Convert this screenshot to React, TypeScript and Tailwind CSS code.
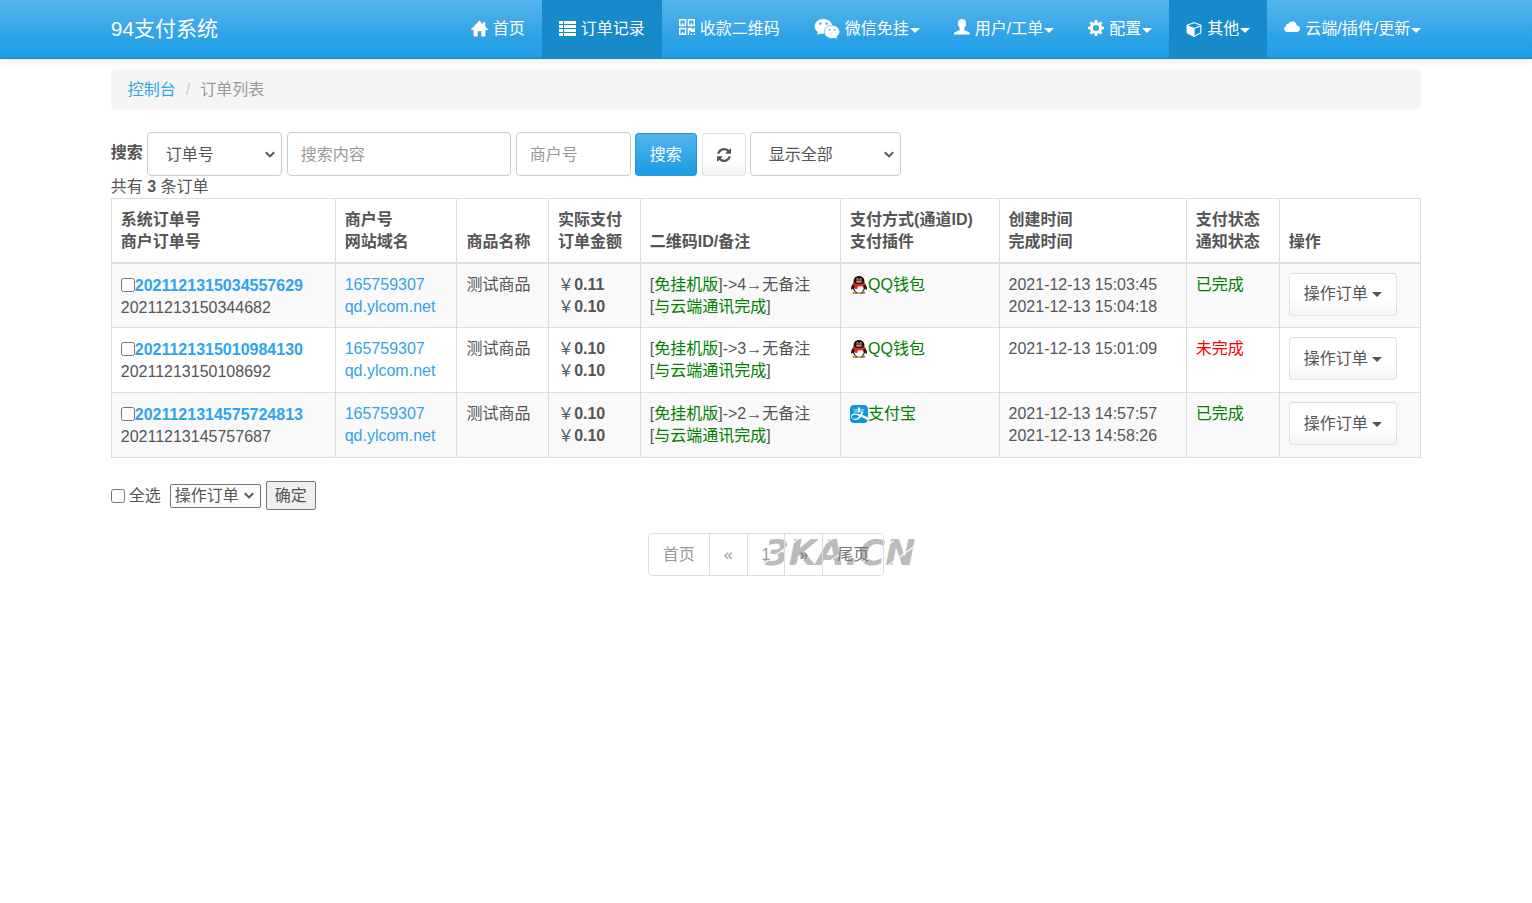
import React, { useState } from "react";
import { FaAlipay, FaWeixin } from "react-icons/fa";

interface Order {
  id: string;
  outId: string;
  merchant: string;
  domain: string;
  product: string;
  paid: string;
  amount: string;
  qrcode: number;
  channel: "qq" | "alipay";
  createdAt: string;
  finishedAt?: string;
  done: boolean;
}

const orders: Order[] = [
  {
    id: "2021121315034557629",
    outId: "20211213150344682",
    merchant: "165759307",
    domain: "qd.ylcom.net",
    product: "测试商品",
    paid: "0.11",
    amount: "0.10",
    qrcode: 4,
    channel: "qq",
    createdAt: "2021-12-13 15:03:45",
    finishedAt: "2021-12-13 15:04:18",
    done: true,
  },
  {
    id: "2021121315010984130",
    outId: "20211213150108692",
    merchant: "165759307",
    domain: "qd.ylcom.net",
    product: "测试商品",
    paid: "0.10",
    amount: "0.10",
    qrcode: 3,
    channel: "qq",
    createdAt: "2021-12-13 15:01:09",
    done: false,
  },
  {
    id: "2021121314575724813",
    outId: "20211213145757687",
    merchant: "165759307",
    domain: "qd.ylcom.net",
    product: "测试商品",
    paid: "0.10",
    amount: "0.10",
    qrcode: 2,
    channel: "alipay",
    createdAt: "2021-12-13 14:57:57",
    finishedAt: "2021-12-13 14:58:26",
    done: true,
  },
];

const HomeIcon = () => (
  <svg className="mb-0.5 size-[17px]" viewBox="0 0 16 15" fill="currentColor" aria-hidden="true">
    <path d="M8 0 0 8.200c-.2.3 0 .6.3.6H2.400v5.600c0 .400.200.600.600.600h3.300v-5h3.400v5H13c.400 0 .600-.200.600-.600V8.800h2.100c.300 0 .500-.300.300-.600L13.400 5.500V1.500h-2v2z" />
  </svg>
);

const ListIcon = () => (
  <svg className="h-4 w-[17px]" viewBox="0 0 17 16" fill="currentColor" aria-hidden="true">
    <path d="M0 0h4v3H0zM5 0h12v3H5zM0 4h4v3H0zM5 4h12v3H5zM0 8h4v3H0zM5 8h12v3H5zM0 12h4v3H0zM5 12h12v3H5z" />
  </svg>
);

const QrcodeIcon = () => (
  <svg className="mb-1 size-4" viewBox="0 0 1408 1408" fill="currentColor" aria-hidden="true">
    <path d="M384 1152v128h-128v-128h128zm0-768v128h-128v-128h128zm768 0v128h-128v-128h128zm-1024 895h384v-383h-384v383zm0-767h384v-384h-384v384zm768 0h384v-384h-384v384zm-256 256v640h-640v-640h640zm512 512v128h-128v-128h128zm256 0v128h-128v-128h128zm0-512v384h-384v-128h-128v384h-128v-640h384v128h128v-128h128zm-768-768v640h-640v-640h640zm768 0v640h-640v-640h640z" />
  </svg>
);

const UserIcon = () => (
  <svg className="mb-1 size-4" viewBox="0 0 16 16" fill="currentColor" aria-hidden="true">
    <path d="M8 0c2.500 0 4.100 1.600 4.100 4 0 2-.7 3.900-1.800 5v1.300c0 .5.300.9.800 1.100l3.600 1.500c.8.400 1.300 1.100 1.300 1.900v.6H0v-.6c0-.8.5-1.500 1.300-1.900l3.600-1.500c.5-.2.800-.6.800-1.100V9C4.600 7.900 3.900 6 3.900 4 3.900 1.600 5.500 0 8 0z" />
  </svg>
);

const CogIcon = () => (
  <svg className="mb-0.5 size-4" viewBox="0 0 16 16" fill="currentColor" aria-hidden="true">
    <path
      fillRule="evenodd"
      d="M6.800 0h2.400l.4 2.300 1.300.5 1.900-1.300 1.700 1.700-1.300 1.900.5 1.300 2.300.4v2.400l-2.300.4-.5 1.300 1.300 1.900-1.700 1.700-1.900-1.300-1.300.5-.4 2.300H6.800l-.4-2.300-1.300-.5-1.900 1.300-1.700-1.700 1.300-1.900-.5-1.300L0 9.200V6.800l2.300-.4.5-1.300-1.300-1.900 1.700-1.700 1.900 1.300 1.300-.5zM8 4.900a3.100 3.100 0 1 0 0 6.200 3.100 3.100 0 0 0 0-6.200z"
    />
  </svg>
);

const CubeIcon = () => (
  <svg className="size-4" viewBox="0 0 1664 1792" fill="currentColor" aria-hidden="true">
    <path d="M896 1629l640-349v-636l-640 233v752zm-64-865l698-254-698-254-698 254zm832-252v768q0 35-18 65t-49 47l-704 384q-28 16-61 16t-61-16l-704-384q-31-17-49-47t-18-65v-768q0-40 23-73t61-47l704-256q22-8 44-8t44 8l704 256q38 14 61 47t23 73z" />
  </svg>
);

const CloudIcon = () => (
  <svg className="mb-1 size-4" viewBox="0 1 16 14" fill="currentColor" aria-hidden="true">
    <path d="M3 13a3 3 0 0 1-1-5.800 2.200 2.200 0 0 1 2.500-2.500A4.400 4.400 0 0 1 12.700 6.400c1.900-.1 3.300 1.400 3.300 3.300S14.500 13 12.800 13z" />
  </svg>
);

const RefreshIcon = () => (
  <svg className="size-[14px]" viewBox="0 0 1536 1536" fill="currentColor" aria-hidden="true">
    <path d="M1511 928q0 5-1 7-64 268-268 434.500t-478 166.500q-146 0-282.500-55t-243.500-157l-129 129q-19 19-45 19t-45-19-19-45v-448q0-26 19-45t45-19h448q26 0 45 19t19 45-19 45l-137 137q71 66 161 102t187 36q134 0 250-65t186-179q11-17 53-117 8-23 30-23h192q13 0 22.500 9.500t9.500 22.500zm25-800v448q0 26-19 45t-45 19h-448q-26 0-45-19t-19-45 19-45l138-138q-148-137-349-137-134 0-250 65t-186 179q-11 17-53 117-8 23-30 23h-199q-13 0-22.500-9.500t-9.500-22.500v-7q65-268 270-434.500t480-166.500q146 0 284 55.500t245 156.500l130-129q19-19 45-19t45 19 19 45z" />
  </svg>
);

const QQIcon = () => (
  <svg className="size-[18px]" viewBox="0 0 18 18" aria-hidden="true">
    <ellipse cx="5.800" cy="16.700" rx="3.300" ry="1.300" fill="#c98a3a" />
    <ellipse cx="12.200" cy="16.700" rx="3.300" ry="1.300" fill="#c98a3a" />
    <path
      d="M9 0C5.600 0 3.600 2.300 3.600 5.300v1.500C2.200 8.500.9 10.900 1 12.800c.1 1.300 1 .9 2-.4.7 2.700 3.100 4.800 6 4.800s5.300-2.100 6-4.800c1 1.300 1.900 1.700 2 .4.100-1.900-1.200-4.300-2.600-6V5.300C14.400 2.300 12.400 0 9 0z"
      fill="#1a1414"
    />
    <ellipse cx="9" cy="12.600" rx="4.600" ry="4.200" fill="#fff" />
    <ellipse cx="7.500" cy="3.500" rx=".9" ry="1.200" fill="#ddd" />
    <ellipse cx="10.500" cy="3.500" rx=".9" ry="1.200" fill="#ddd" />
    <circle cx="7.700" cy="3.700" r=".5" fill="#000" />
    <circle cx="10.300" cy="3.700" r=".5" fill="#000" />
    <ellipse cx="9" cy="5.800" rx="3.200" ry="1" fill="#e8912a" />
    <path d="M3.200 6.800c3.700 1.800 7.900 1.800 11.600 0l.6 2.200c-2.400 1.200-5.100 1.600-7.700 1.400l-.3 2.600-2.500-.3.200-2.800-2.500-.8z" fill="#e3241f" />
  </svg>
);

const Caret = ({ className = "" }: { className?: string }) => (
  <span
    className={`inline-block border-x-5 border-t-5 border-x-transparent border-t-current align-middle ${className}`}
  />
);

interface SelectProps extends React.SelectHTMLAttributes<HTMLSelectElement> {
  options: string[];
  wrapper?: string;
}

const Select: React.FC<SelectProps> = ({ options, wrapper = "", className = "", ...rest }) => (
  <div className={`relative ${wrapper}`}>
    <select {...rest} className={`w-full appearance-none ${className}`}>
      {options.map((option) => (
        <option key={option}>{option}</option>
      ))}
    </select>
    <svg
      className="pointer-events-none absolute inset-y-0 right-[7px] my-auto h-[7px] w-[10px]"
      viewBox="0 0 10 7"
      fill="none"
      stroke="currentColor"
      strokeWidth="2"
      aria-hidden="true"
    >
      <path d="M.8 1.200 5 5.400l4.200-4.200" />
    </svg>
  </div>
);

interface NavItem {
  label: string;
  icon: React.ReactNode;
  active?: boolean;
  menu?: boolean;
}

const navItems: NavItem[] = [
  { label: "首页", icon: <HomeIcon /> },
  { label: "订单记录", icon: <ListIcon />, active: true },
  { label: "收款二维码", icon: <QrcodeIcon /> },
  { label: "微信免挂", icon: <FaWeixin className="size-[26px]" />, menu: true },
  { label: "用户/工单", icon: <UserIcon />, menu: true },
  { label: "配置", icon: <CogIcon />, menu: true },
  { label: "其他", icon: <CubeIcon />, active: true, menu: true },
  { label: "云端/插件/更新", icon: <CloudIcon />, menu: true },
];

const Navbar = () => (
  <nav className="border-b border-[#178acc] bg-linear-to-b from-[#54b4eb] via-[#2fa4e7] via-60% to-[#1d9ce5] text-white shadow-[0_1px_10px_rgba(0,0,0,0.1)]">
    <div className="mx-auto flex w-7/8 justify-between px-[15px]">
      <a href="#" className="flex h-[58px] items-center text-[21px] whitespace-nowrap">
        94支付系统
      </a>
      <ul className="-mr-[17px] flex">
        {navItems.map((item) => (
          <li key={item.label}>
            <a
              href="#"
              className={`flex h-[58px] items-center px-[17px] whitespace-nowrap ${item.active ? "bg-[#178acc]" : ""}`}
            >
              <span className="mr-[5px]">{item.icon}</span>
              {item.label}
              {item.menu && <Caret className="mt-0.5 ml-px" />}
            </a>
          </li>
        ))}
      </ul>
    </div>
  </nav>
);

const controlClass = "h-11 rounded border border-[#ccc] bg-white pt-0.5 text-[#555] placeholder:text-[#999]";
const defaultBtn =
  "rounded border border-black/10 bg-linear-to-b from-white via-white via-60% to-[#f5f5f5] text-[#555]";

const SearchForm = () => (
  <form className="flex items-center gap-[5px]" onSubmit={(e) => e.preventDefault()}>
    <label htmlFor="column" className="-mr-px mb-0.5 font-bold">
      搜索
    </label>
    <Select
      id="column"
      options={["订单号", "商户订单号"]}
      wrapper="w-[135px]"
      className={`${controlClass} px-[18px]`}
    />
    <input type="text" aria-label="搜索内容" placeholder="搜索内容" className={`${controlClass} w-56 px-[13px]`} />
    <input type="text" aria-label="商户号" placeholder="商户号" className={`${controlClass} w-[115px] px-[13px]`} />
    <button
      type="submit"
      className="mt-px -ml-px h-[43px] rounded border border-[#178acc]/60 bg-linear-to-b from-[#54b4eb] via-[#2fa4e7] via-60% to-[#1d9ce5] px-[14px] text-white"
    >
      搜索
    </button>
    <button
      type="button"
      aria-label="刷新"
      className={`${defaultBtn} mt-px flex h-[43px] w-11 items-center justify-center`}
    >
      <RefreshIcon />
    </button>
    <Select
      aria-label="显示"
      options={["显示全部", "已完成", "未完成"]}
      wrapper="-ml-px w-[151px]"
      className={`${controlClass} px-[18px]`}
    />
  </form>
);

const columns = [
  { lines: ["系统订单号", "商户订单号"], width: "w-[17.1%]" },
  { lines: ["商户号", "网站域名"], width: "w-[9.3%]" },
  { lines: ["商品名称"], width: "w-[7%]" },
  { lines: ["实际支付", "订单金额"], width: "w-[7%]" },
  { lines: ["二维码ID/备注"], width: "w-[15.3%]" },
  { lines: ["支付方式(通道ID)", "支付插件"], width: "w-[12.1%]" },
  { lines: ["创建时间", "完成时间"], width: "w-[14.3%]" },
  { lines: ["支付状态", "通知状态"], width: "w-[7.1%]" },
  { lines: ["操作"], width: "w-[10.8%]" },
];

const cell = "border border-[#ddd] px-[9px] pt-[10px] align-top";

interface OrderRowProps {
  order: Order;
  checked: boolean;
  onToggle: () => void;
}

const OrderRow: React.FC<OrderRowProps> = ({ order, checked, onToggle }) => (
  <tr className="h-[65px] odd:bg-[#f9f9f9]">
    <td className={cell}>
      <div className="flex items-center pt-px">
        <input
          type="checkbox"
          aria-label={order.id}
          checked={checked}
          onChange={onToggle}
          className="mb-0.5 size-[14px] shrink-0"
        />
        <a href="#" className="font-bold text-[#2fa4e7]">
          {order.id}
        </a>
      </div>
      {order.outId}
    </td>
    <td className={`${cell} text-[#2fa4e7]`}>
      <a href="#">{order.merchant}</a>
      <br />
      <a href="#">{order.domain}</a>
    </td>
    <td className={cell}>{order.product}</td>
    <td className={cell}>
      ￥<b>{order.paid}</b>
      <br />￥<b>{order.amount}</b>
    </td>
    <td className={cell}>
      [<span className="text-[#008000]">免挂机版</span>]-&gt;{order.qrcode}→无备注
      <br />[<span className="text-[#008000]">与云端通讯完成</span>]
    </td>
    <td className={cell}>
      <div className="flex items-center text-[#008000]">
        {order.channel === "qq" ? (
          <QQIcon />
        ) : (
          <FaAlipay viewBox="0 32 448 448" className="size-[18px] rounded bg-white text-[#1296db]" />
        )}
        {order.channel === "qq" ? "QQ钱包" : "支付宝"}
      </div>
    </td>
    <td className={cell}>
      {order.createdAt}
      <br />
      {order.finishedAt}
    </td>
    <td className={`${cell} ${order.done ? "text-[#008000]" : "text-[#f00]"}`}>
      {order.done ? "已完成" : "未完成"}
    </td>
    <td className="border border-[#ddd] px-[9px] pt-[9px] align-top">
      <button type="button" className={`${defaultBtn} h-[43px] px-[14px] whitespace-nowrap`}>
        操作订单
        <Caret className="ml-1" />
      </button>
    </td>
  </tr>
);

const pages = ["首页", "«", "1", "»", "尾页"];

const Pagination = () => (
  <div className="mt-[23px] flex justify-center">
    <div className="relative">
      <div className="pointer-events-none absolute top-0 left-[116px] font-['DejaVu_Sans','Liberation_Sans',sans-serif] text-4xl leading-[39px] font-bold whitespace-nowrap text-[#bbb] italic">
        3KA.CN
        <svg className="absolute inset-0 size-full" viewBox="0 0 152 40" preserveAspectRatio="none" aria-hidden="true">
          <path
            d="M0 31 36 5M28 35 70 5M56 35 102 5M92 35 130 8M122 35 154 11"
            stroke="#fff"
            strokeWidth="1.200"
          />
        </svg>
      </div>
      <ul className="relative flex text-[#999]">
        {pages.map((page) => (
          <li key={page} className="group -ml-px first:ml-0">
            <a
              href="#"
              className={`flex h-[43px] items-center border border-[#ddd] px-[14px] group-first:rounded-l group-last:rounded-r ${
                page === "»" || page === "尾页" ? "text-[#777]" : ""
              }`}
            >
              {page}
            </a>
          </li>
        ))}
      </ul>
    </div>
  </div>
);

const App: React.FC = () => {
  const [selected, setSelected] = useState<string[]>([]);

  const toggle = (id: string) => {
    setSelected((prev) => (prev.includes(id) ? prev.filter((x) => x !== id) : [...prev, id]));
  };

  const allSelected = selected.length === orders.length;

  return (
    <div className="font-['Liberation_Sans','Noto_Sans_CJK_SC',sans-serif] text-base leading-[22px] text-[#555]">
      <Navbar />
      <main className="mx-auto w-7/8 px-[15px] pt-[10px]">
        {/* 面包屑 */}
        <ol className="flex h-10 items-center rounded bg-[#f5f5f5] px-[17px] pt-0.5 text-[#999]">
          <li>
            <a href="#" className="text-[#2fa4e7]">
              控制台
            </a>
          </li>
          <li className="px-[10px] text-[#ccc]">/</li>
          <li>订单列表</li>
        </ol>

        <div className="mt-[23px]">
          <SearchForm />
        </div>
        <p>
          共有 <b>3</b> 条订单
        </p>

        {/* 订单列表 */}
        <table className="w-full table-fixed border-collapse">
          <thead>
            <tr className="h-16">
              {columns.map((col) => (
                <th
                  key={col.lines[0]}
                  className={`${col.width} border border-b-2 border-[#ddd] px-[9px] py-[9px] text-left align-bottom`}
                >
                  {col.lines.map((line) => (
                    <div key={line} className="whitespace-nowrap">
                      {line}
                    </div>
                  ))}
                </th>
              ))}
            </tr>
          </thead>
          <tbody>
            {orders.map((order) => (
              <OrderRow
                key={order.id}
                order={order}
                checked={selected.includes(order.id)}
                onToggle={() => toggle(order.id)}
              />
            ))}
          </tbody>
        </table>

        {/* 批量操作 */}
        <div className="mt-[23px] flex items-center">
          <label className="flex items-center">
            <input
              type="checkbox"
              checked={allSelected}
              onChange={() => setSelected(allSelected ? [] : orders.map((o) => o.id))}
              className="mr-1 size-[14px]"
            />
            全选
          </label>
          <Select
            aria-label="批量操作"
            options={["操作订单", "删除订单"]}
            wrapper="ml-[9px] w-[91px]"
            className="h-6 rounded-xs border border-[#767676] bg-white pl-1"
          />
          <button
            type="button"
            className="ml-[5px] h-[29px] rounded-xs border border-[#767676] bg-[#efefef] px-2"
          >
            确定
          </button>
        </div>

        <Pagination />
      </main>
    </div>
  );
};

export default App;
